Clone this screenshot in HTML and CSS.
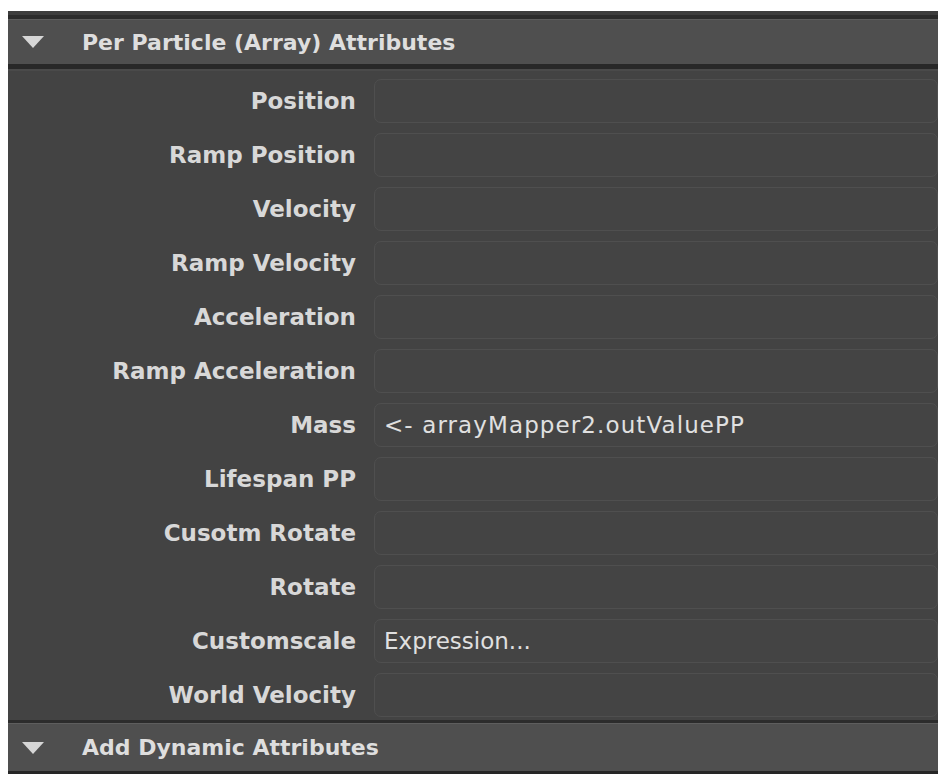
FILE: index.html
```html
<!DOCTYPE html>
<html lang="en">
<head>
<meta charset="utf-8">
<title>Attribute Editor</title>
<link rel="stylesheet" href="styles.css">
</head>
<body>
<div class="panel">
  <div class="top-edge"></div>
  <div class="section-header">
    <svg class="caret" width="22" height="12" viewBox="0 0 22 12"><polygon points="0,0 22,0 11,12" fill="#d6d6d6"/></svg>
    <span class="section-title">Per Particle (Array) Attributes</span>
  </div>
  <div class="section-body">
    <div class="row"><span class="label">Position</span><div class="field"></div></div>
    <div class="row"><span class="label">Ramp Position</span><div class="field"></div></div>
    <div class="row"><span class="label">Velocity</span><div class="field"></div></div>
    <div class="row"><span class="label">Ramp Velocity</span><div class="field"></div></div>
    <div class="row"><span class="label">Acceleration</span><div class="field"></div></div>
    <div class="row"><span class="label">Ramp Acceleration</span><div class="field"></div></div>
    <div class="row"><span class="label">Mass</span><div class="field connection">&lt;- arrayMapper2.outValuePP</div></div>
    <div class="row"><span class="label">Lifespan PP</span><div class="field"></div></div>
    <div class="row"><span class="label">Cusotm Rotate</span><div class="field"></div></div>
    <div class="row"><span class="label">Rotate</span><div class="field"></div></div>
    <div class="row"><span class="label">Customscale</span><div class="field">Expression...</div></div>
    <div class="row"><span class="label">World Velocity</span><div class="field"></div></div>
  </div>
  <div class="section-header second">
    <svg class="caret" width="22" height="12" viewBox="0 0 22 12"><polygon points="0,0 22,0 11,12" fill="#d6d6d6"/></svg>
    <span class="section-title">Add Dynamic Attributes</span>
  </div>
</div>
</body>
</html>
```
FILE: styles.css
```css
html, body {
  margin: 0;
  padding: 0;
  background: #ffffff;
  overflow: hidden;
}

body {
  width: 938px;
  height: 774px;
}

.panel {
  margin: 11px 0 0 8px;
  width: 930px;
  height: 763px;
  background: #434343;
  font-family: "DejaVu Sans", "Open Sans", sans-serif;
  overflow: hidden;
}

/* dark strip above the first section */
.top-edge {
  height: 8px;
  background: linear-gradient(#3d3d3d 0, #3d3d3d 4px, #2b2b2b 4px, #2b2b2b 8px);
}

.section-header {
  display: flex;
  align-items: center;
  height: 44px;
  background: #4f4f4f;
  border-top: 1px solid #5c5c5c;
  border-bottom: 5px solid #282828;
  color: #dedede;
}

.section-header.second {
  height: 47px;
  border-top: 1px solid #5e5e5e;
  border-bottom: 3px solid #262626;
}

.caret {
  margin-left: 14px;
  margin-right: 38px;
  flex: none;
}

.section-title {
  font-weight: bold;
  font-size: 22px;
}

.section-body {
  display: flex;
  flex-direction: column;
  gap: 8px;
  padding: 7px 0 2px;
  background: #434343;
  border-top: 2px solid #4a4a4a;
  border-bottom: 3px solid #2c2c2c;
}

.row {
  display: flex;
  align-items: center;
  height: 46px;
}

.label {
  width: 348px;
  text-align: right;
  font-weight: bold;
  font-size: 23px;
  color: #d8d8d8;
  flex: none;
}

.field {
  margin-left: 18px;
  width: 700px;
  height: 44px;
  box-sizing: border-box;
  border: 1.5px solid #4f4f4f;
  border-radius: 7px;
  background: #444444;
  display: flex;
  align-items: center;
  padding-left: 9px;
  font-size: 23px;
  color: #e0e0e0;
}

/* incoming connection name, set slightly looser */
.field.connection {
  letter-spacing: 1.1px;
}
```
